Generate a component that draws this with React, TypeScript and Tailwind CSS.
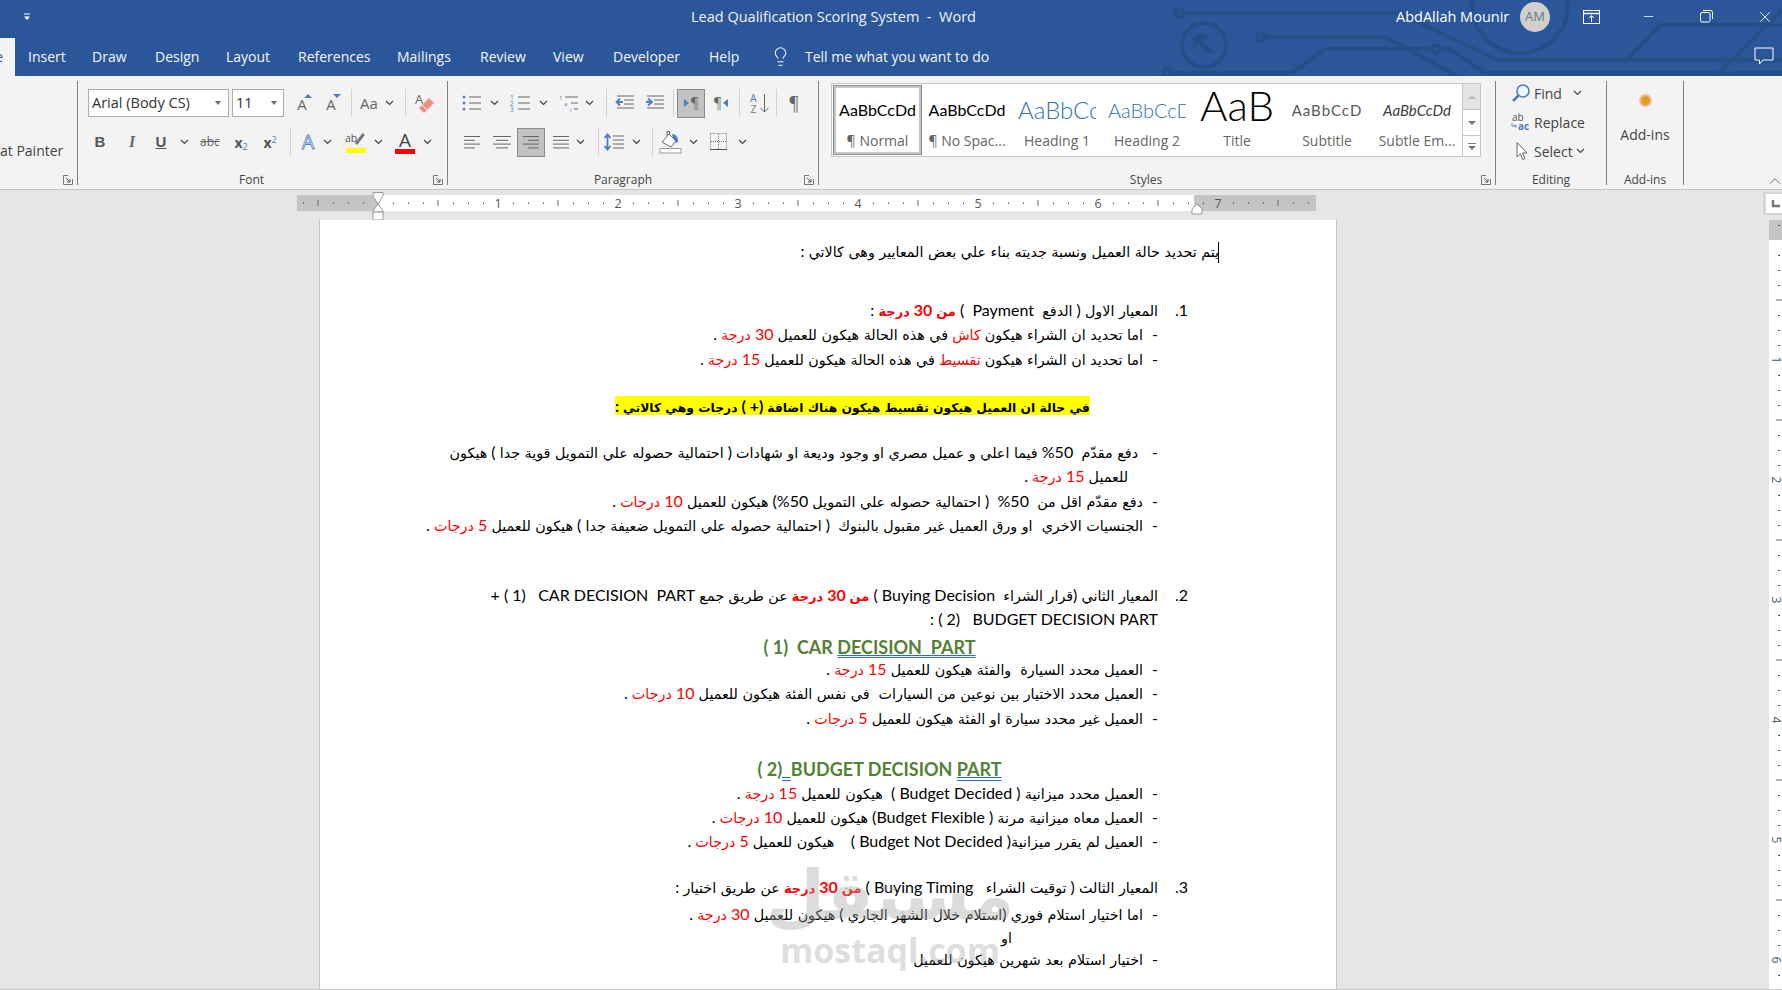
import React from 'react';
import { Lightbulb, Minus, X, ChevronUp } from 'lucide-react';

const tabs = [
  { label: 'Insert', w: 'w-[64px]' },
  { label: 'Draw', w: 'w-[63px]' },
  { label: 'Design', w: 'w-[71px]' },
  { label: 'Layout', w: 'w-[72px]' },
  { label: 'References', w: 'w-[99px]' },
  { label: 'Mailings', w: 'w-[83px]' },
  { label: 'Review', w: 'w-[73px]' },
  { label: 'View', w: 'w-[60px]' },
  { label: 'Developer', w: 'w-[96px]' },
  { label: 'Help', w: 'w-[72px]' },
];

function Chev({ className = '' }: { className?: string }) {
  return (
    <svg width="9" height="6" viewBox="0 0 9 6" className={`shrink-0 ${className}`}>
      <path d="M1 1l3.5 3.5L8 1" stroke="#444" fill="none" strokeWidth="1.2" />
    </svg>
  );
}

function Launcher() {
  return (
    <svg width="10" height="10" viewBox="0 0 10 10" className="absolute right-[4px] top-[3px]">
      <path d="M9.5 4V9.5H.5V.5H5" stroke="#777" fill="none" />
      <path d="M3 3l4 4M7 4v3H4" stroke="#555" fill="none" />
    </svg>
  );
}

function Sep({ className = '' }: { className?: string }) {
  return <div className={`w-px h-[28px] bg-[#d2d2d2] shrink-0 ${className}`} />;
}

function GroupLabel({ text, className = '', launcher = true }: { text: string; className?: string; launcher?: boolean }) {
  return (
    <div className="relative mt-auto -mb-[3px] h-[16px] text-center text-[12px] leading-[16px] text-[#444]">
      <div className={className}>{text}</div>
      {launcher && <Launcher />}
    </div>
  );
}

function Lines({ kind }: { kind: 'left' | 'center' | 'right' | 'justify' }) {
  const rows = {
    left: [[3, 19], [3, 14], [3, 19], [3, 14]],
    center: [[2, 20], [5, 17], [2, 20], [5, 17]],
    right: [[3, 19], [8, 19], [3, 19], [8, 19]],
    justify: [[3, 19], [3, 19], [3, 19], [3, 19]],
  }[kind];
  return (
    <svg width="22" height="16" viewBox="0 0 22 16">
      {rows.map(([a, b], i) => (
        <path key={i} d={`M${a} ${2.5 + i * 3.8}H${b}`} stroke="#666" strokeWidth="1" />
      ))}
    </svg>
  );
}

function Bullets() {
  return (
    <svg width="22" height="18" viewBox="0 0 22 18">
      {[3, 9, 15].map((y) => (
        <g key={y}>
          <circle cx="3" cy={y} r="1.5" fill="#5b86c1" />
          <path d={`M8 ${y}H20`} stroke="#666" />
        </g>
      ))}
    </svg>
  );
}

function Numbered() {
  return (
    <svg width="22" height="18" viewBox="0 0 22 18">
      {[3, 9, 15].map((y, i) => (
        <g key={y}>
          <text x="0" y={y + 2.5} fontSize="6.5" fill="#4c7ebb" fontFamily="Open Sans">{i + 1}</text>
          <path d={`M8 ${y}H20`} stroke="#666" />
        </g>
      ))}
    </svg>
  );
}

function Multi() {
  return (
    <svg width="22" height="18" viewBox="0 0 22 18">
      <text x="0" y="6" fontSize="6" fill="#4c7ebb" fontFamily="Open Sans">1</text>
      <path d="M6 3H19" stroke="#666" />
      <text x="5" y="12" fontSize="6" fill="#4c7ebb" fontFamily="Open Sans">a</text>
      <path d="M12 9H19" stroke="#666" />
      <text x="11" y="18" fontSize="6" fill="#4c7ebb" fontFamily="Open Sans">i</text>
      <path d="M15 15H19" stroke="#666" />
    </svg>
  );
}

function Indent({ inc }: { inc?: boolean }) {
  return (
    <svg width="22" height="18" viewBox="0 0 22 18">
      {[2, 6, 10, 14].map((y, i) => (
        <path key={y} d={`M${i === 1 || i === 2 ? 10 : 3} ${y}H20`} stroke="#666" />
      ))}
      {inc ? (
        <path d="M2 8H7M4 4.5L8 8l-4 3.5" stroke="#4c7ebb" strokeWidth="1.8" fill="none" />
      ) : (
        <path d="M9 8H3M6 4.5L2.5 8 6 11.5" stroke="#4c7ebb" strokeWidth="1.8" fill="none" />
      )}
    </svg>
  );
}

function Dir({ rtl }: { rtl?: boolean }) {
  return (
    <div className="flex items-center text-[16px] leading-none text-[#666] font-['Liberation_Serif',serif]">
      {!rtl && <span className="w-0 h-0 mr-[2px] border-y-[4px] border-y-transparent border-l-[5px] border-l-[#4c7ebb]" />}
      <span>¶</span>
      {rtl && <span className="w-0 h-0 ml-[2px] border-y-[4px] border-y-transparent border-r-[5px] border-r-[#4c7ebb]" />}
    </div>
  );
}

function Sort() {
  return (
    <svg width="22" height="22" viewBox="0 0 22 22">
      <text x="1" y="10" fontSize="10.5" fill="#4c7ebb" fontFamily="Open Sans">A</text>
      <text x="1.5" y="20.5" fontSize="10.5" fill="#777" fontFamily="Open Sans">Z</text>
      <path d="M15.5 2V20M11.5 16l4 4 4-4" stroke="#666" fill="none" />
    </svg>
  );
}

function Spacing() {
  return (
    <svg width="22" height="20" viewBox="0 0 22 20">
      <path d="M3.5 3V17M.5 6l3-3.5L6.5 6M.5 14l3 3.5 3-3.5" stroke="#4c7ebb" strokeWidth="1.8" fill="none" />
      {[4, 8, 12, 16].map((y) => (
        <path key={y} d={`M9 ${y}H20`} stroke="#666" />
      ))}
    </svg>
  );
}

function Shading() {
  return (
    <svg width="24" height="24" viewBox="0 0 24 24">
      <path d="M3 12L10 4l7 7-5 6z" fill="#fff" stroke="#666" />
      <path d="M8 6V1.5h2.5V5" fill="none" stroke="#666" />
      <path d="M13 4c4 0 6 3 6 8l-2 1-3-5z" fill="#4c7ebb" />
      <rect x="1" y="18.5" width="21" height="4.5" fill="#fff" stroke="#999" />
    </svg>
  );
}

function Borders() {
  return (
    <svg width="22" height="20" viewBox="0 0 22 20">
      <rect x="2.5" y="1.5" width="16" height="16" fill="none" stroke="#777" strokeDasharray="1 1" />
      <path d="M10.5 2V17M3 9.5H18" stroke="#777" strokeDasharray="1 1" />
      <path d="M2 17.5H19" stroke="#555" />
    </svg>
  );
}

function Grow({ up }: { up?: boolean }) {
  return (
    <div className="relative w-[20px] h-[20px] text-[15px] leading-[22px] text-[#666] text-center">
      A
      <span
        className={
          up
            ? 'absolute right-[0px] top-[1px] w-0 h-0 border-x-[4px] border-x-transparent border-b-[4px] border-b-[#4c7ebb]'
            : 'absolute right-[0px] top-[1px] w-0 h-0 border-x-[4px] border-x-transparent border-t-[4px] border-t-[#4c7ebb]'
        }
      />
    </div>
  );
}

function Eraser() {
  return (
    <svg width="22" height="24" viewBox="0 0 22 24">
      <text x="1" y="13" fontSize="13" fill="#666" fontFamily="Open Sans">A</text>
      <path d="M5 17L15 7l5 5-10 10z" fill="#f28b82" />
      <path d="M8 14l5 5" stroke="#fff" />
    </svg>
  );
}

function Highlight() {
  return (
    <div className="flex flex-col items-center w-[22px]">
      <svg width="22" height="17" viewBox="0 0 22 17">
        <text x="0" y="11" fontSize="10.5" fill="#555" fontFamily="Open Sans">ab</text>
        <path d="M12 14l8-10-2.5-2L10 12z" fill="#777" />
      </svg>
      <div className="w-[20px] h-[5px] bg-[#ffff00]" />
    </div>
  );
}

function ColorA() {
  return (
    <div className="flex flex-col items-center w-[22px]">
      <span className="text-[19px] leading-[18px] text-[#444]">A</span>
      <div className="w-[20px] h-[5px] bg-[#ff0000]" />
    </div>
  );
}

function Row({ children, className = '' }: { children: React.ReactNode; className?: string }) {
  return <div className={`flex items-center h-[28px] ${className}`}>{children}</div>;
}

function ActiveBox({ children, className = '' }: { children: React.ReactNode; className?: string }) {
  return (
    <div className={`w-[28px] h-[29px] flex items-center justify-center bg-[#c2c2c2] border border-[#8a8a8a] ${className}`}>
      {children}
    </div>
  );
}

function FontGroup() {
  return (
    <div className="flex flex-col w-[370px] h-[104px] border-r border-[#808080] shrink-0">
      <Row className="mt-[8px]">
        <div className="ml-[10px] w-[141px] h-[28px] border border-[#ababab] bg-white flex items-center justify-between pl-[3px] pr-[7px] text-[14.5px] text-[#333]">
          <span>Arial (Body CS)</span>
          <span className="w-0 h-0 border-x-[3.5px] border-x-transparent border-t-[4px] border-t-[#666]" />
        </div>
        <div className="ml-[3px] w-[52px] h-[28px] border border-[#ababab] bg-white flex items-center justify-between pl-[3px] pr-[6px] text-[14.5px] text-[#333]">
          <span>11</span>
          <span className="w-0 h-0 border-x-[3.5px] border-x-transparent border-t-[4px] border-t-[#666]" />
        </div>
        <div className="ml-[8px]"><Grow up /></div>
        <div className="ml-[9px]"><Grow /></div>
        <Sep className="ml-[10px]" />
        <span className="ml-[6px] w-[22px] text-center text-[15px] text-[#666]">Aa</span>
        <Chev className="ml-[5px]" />
        <Sep className="ml-[11px]" />
        <div className="ml-[8px]"><Eraser /></div>
      </Row>
      <Row className="mt-[11px]">
        <span className="ml-[14px] w-[16px] text-center text-[15px] font-bold text-[#555] font-['Liberation_Sans',sans-serif]">B</span>
        <span className="ml-[16px] w-[16px] text-center text-[16px] italic font-bold text-[#666] font-['Liberation_Serif',serif]">I</span>
        <span className="ml-[13px] w-[16px] text-center text-[15px] font-bold underline text-[#555] font-['Liberation_Sans',sans-serif]">U</span>
        <Chev className="ml-[11px]" />
        <span className="ml-[9px] w-[24px] text-center text-[12px] line-through text-[#666]">abc</span>
        <span className="ml-[9px] w-[20px] text-center text-[14px] font-bold text-[#555]">x<sub className="text-[9px] font-normal text-[#4c7ebb]">2</sub></span>
        <span className="ml-[9px] w-[20px] text-center text-[14px] font-bold text-[#555]">x<sup className="text-[9px] font-normal text-[#4c7ebb]">2</sup></span>
        <Sep className="ml-[10px]" />
        <span className="ml-[6px] w-[22px] text-center text-[20px] leading-[22px] text-[#f3f8ff] [-webkit-text-stroke:0.8px_#5b86c1]">A</span>
        <Chev className="ml-[4px]" />
        <div className="ml-[13px]"><Highlight /></div>
        <Chev className="ml-[7px]" />
        <div className="ml-[11px]"><ColorA /></div>
        <Chev className="ml-[7px]" />
      </Row>
      <GroupLabel text="Font" className="pr-[22px]" />
    </div>
  );
}

function ParagraphGroup() {
  return (
    <div className="flex flex-col w-[371px] h-[104px] border-r border-[#808080] shrink-0">
      <Row className="mt-[8px]">
        <div className="ml-[13px]"><Bullets /></div>
        <Chev className="ml-[7px]" />
        <div className="ml-[11px]"><Numbered /></div>
        <Chev className="ml-[7px]" />
        <div className="ml-[11px]"><Multi /></div>
        <Chev className="ml-[4px]" />
        <Sep className="ml-[12px]" />
        <div className="ml-[7px]"><Indent /></div>
        <div className="ml-[8px]"><Indent inc /></div>
        <Sep className="ml-[7px]" />
        <ActiveBox className="ml-[3px]"><Dir /></ActiveBox>
        <div className="ml-[5px] w-[22px] flex justify-center"><Dir rtl /></div>
        <Sep className="ml-[7px]" />
        <div className="ml-[9px]"><Sort /></div>
        <Sep className="ml-[5px]" />
        <span className="ml-[7px] w-[20px] text-center text-[20px] text-[#666] font-['Liberation_Serif',serif]">¶</span>
      </Row>
      <Row className="mt-[11px]">
        <div className="ml-[13px]"><Lines kind="left" /></div>
        <div className="ml-[8px]"><Lines kind="center" /></div>
        <ActiveBox className="ml-[4px]"><div className="-ml-[1px]"><Lines kind="right" /></div></ActiveBox>
        <div className="ml-[5px]"><Lines kind="justify" /></div>
        <Chev className="ml-[4px]" />
        <Sep className="ml-[13px]" />
        <div className="ml-[5px]"><Spacing /></div>
        <Chev className="ml-[6px]" />
        <Sep className="ml-[11px]" />
        <div className="ml-[6px]"><Shading /></div>
        <Chev className="ml-[6px]" />
        <div className="ml-[10px]"><Borders /></div>
        <Chev className="ml-[8px]" />
      </Row>
      <GroupLabel text="Paragraph" className="pr-[20px]" />
    </div>
  );
}

const styleItems = [
  { sample: 'AaBbCcDd', label: '¶ Normal', cls: "mt-[4px] font-['Lato'] text-[16px] text-black" },
  { sample: 'AaBbCcDd', label: '¶ No Spac...', cls: "mt-[4px] font-['Lato'] text-[16px] text-black" },
  { sample: 'AaBbCcDd', label: 'Heading 1', cls: "mt-[4px] font-['Lato'] font-light text-[24px] text-[#2e74b5]" },
  { sample: 'AaBbCcDd', label: 'Heading 2', cls: "mt-[4px] font-['Lato'] font-light text-[20px] text-[#2e74b5]" },
  { sample: 'AaB', label: 'Title', cls: "-mt-[1px] mb-[5px] font-['Lato'] font-light text-[42px] text-black" },
  { sample: 'AaBbCcD', label: 'Subtitle', cls: "mt-[4px] font-['Lato'] text-[15px] tracking-[1px] text-[#5a5a5a]" },
  { sample: 'AaBbCcDd', label: 'Subtle Em...', cls: "mt-[4px] font-['Lato'] italic text-[15px] text-[#404040]" },
];

function StylesGroup() {
  return (
    <div className="flex flex-col w-[677px] h-[104px] border-r border-[#808080] shrink-0">
      <div className="ml-[12px] mt-[2px] w-[650px] h-[74px] border border-[#c6c6c6] bg-white flex">
        <div className="flex-1 flex pl-[1px] pt-[1px]">
          {styleItems.map((s, i) => (
            <div
              key={s.label}
              className={
                i === 0
                  ? 'w-[89px] h-[70px] border-[3px] border-[#c6c6c6] outline outline-1 -outline-offset-1 outline-[#8a8a8a] flex flex-col items-center shrink-0'
                  : 'w-[90px] h-[70px] border-[3px] border-transparent flex flex-col items-center shrink-0'
              }
            >
              <div className={`w-[78px] h-[36px] overflow-hidden whitespace-nowrap flex items-center justify-center leading-[36px] ${s.cls}`}>
                <span className={i === 2 || i === 3 ? 'w-full' : ''}>{s.sample}</span>
              </div>
              <div className="mt-[2px] text-[14px] leading-[22px] text-[#666] whitespace-nowrap">{s.label}</div>
            </div>
          ))}
        </div>
        <div className="w-[18px] border-l border-[#c6c6c6] flex flex-col">
          <div className="h-[26px] bg-[#e3e3e3] border-b border-[#c6c6c6] flex items-center justify-center">
            <span className="w-0 h-0 border-x-[4px] border-x-transparent border-b-[4px] border-b-[#bbb]" />
          </div>
          <div className="h-[26px] border-b border-[#c6c6c6] flex items-center justify-center">
            <span className="w-0 h-0 border-x-[4px] border-x-transparent border-t-[4px] border-t-[#777]" />
          </div>
          <div className="flex-1 flex flex-col items-center justify-center gap-[2px]">
            <span className="w-[8px] h-px bg-[#777]" />
            <span className="w-0 h-0 border-x-[4px] border-x-transparent border-t-[4px] border-t-[#777]" />
          </div>
        </div>
      </div>
      <GroupLabel text="Styles" className="pr-[22px]" />
    </div>
  );
}

function EditingGroup() {
  return (
    <div className="flex flex-col w-[111px] h-[104px] border-r border-[#808080] shrink-0">
      <div className="pl-[15px] -mt-[1px] flex flex-col gap-[3px] text-[14px] text-[#444]">
        <div className="flex items-center h-[26px]">
          <svg width="20" height="20" viewBox="0 0 20 20">
            <circle cx="12" cy="8" r="6" fill="none" stroke="#4c7ebb" strokeWidth="1.6" />
            <path d="M7.5 12.5L2 18" stroke="#4c7ebb" strokeWidth="2.6" />
          </svg>
          <span className="ml-[3px]">Find</span>
          <Chev className="ml-[11px]" />
        </div>
        <div className="flex items-center h-[26px]">
          <svg width="20" height="20" viewBox="0 0 20 20">
            <text x="1" y="9" fontSize="10" fill="#555" fontFamily="Open Sans">ab</text>
            <path d="M1 11v3h4M4 12.5L5.5 14 4 15.5" stroke="#4c7ebb" fill="none" />
            <text x="7" y="18" fontSize="10" fontWeight="bold" fill="#4c7ebb" fontFamily="Open Sans">ac</text>
          </svg>
          <span className="ml-[3px]">Replace</span>
        </div>
        <div className="flex items-center h-[26px]">
          <svg width="20" height="20" viewBox="0 0 20 20">
            <path d="M6 1.5V16L9.3 12.8 11.8 18.5 14 17.5 11.5 12H16z" fill="#fff" stroke="#666" />
          </svg>
          <span className="ml-[3px]">Select</span>
          <Chev className="ml-[3px]" />
        </div>
      </div>
      <GroupLabel text="Editing" launcher={false} />
    </div>
  );
}

function AddinsGroup() {
  return (
    <div className="flex flex-col w-[77px] h-[104px] border-r border-[#808080] shrink-0">
      <div className="mt-[13px] flex flex-col items-center">
        <span className="w-[13px] h-[13px] rounded-full bg-[#e0a020] border-2 border-[#f6b9a6]" />
        <span className="mt-[18px] text-[14px] text-[#444] leading-[20px]">Add-ins</span>
      </div>
      <GroupLabel text="Add-ins" launcher={false} />
    </div>
  );
}

function Circuit() {
  return (
    <svg className="absolute left-0 top-0" width="1782" height="76" viewBox="0 0 1782 76" fill="none" stroke="#264e87" strokeWidth="4">
      <circle cx="1179" cy="13" r="4" />
      <path d="M1183 13H1400L1497 60H1782" />
      <circle cx="1204" cy="45" r="22" />
      <path d="M1195 37l16 16M1195 37h12M1195 37v12" strokeWidth="5" />
      <circle cx="1261" cy="37" r="4" />
      <path d="M1265 37H1386L1457 76" />
      <circle cx="1167" cy="73" r="4" />
      <path d="M1171 73H1292L1325 49H1432" />
      <circle cx="1436" cy="49" r="4" />
      <path d="M1440 49H1450L1485 73H1782" />
      <circle cx="1520" cy="5" r="48" />
      <path d="M1627 60L1660 25H1782M1716 76L1782 10" />
    </svg>
  );
}

function TitleBar() {
  return (
    <div className="relative h-[76px] bg-[#2b579a] text-white overflow-hidden shrink-0">
      <Circuit />
      <div className="relative h-[38px] flex items-center pb-[5px]">
        <svg width="8" height="8" viewBox="0 0 8 8" className="ml-[23px]">
          <path d="M1 1H7" stroke="#fff" />
          <path d="M1 3.5H7L4 7z" fill="#fff" />
        </svg>
        <div className="ml-[660px] w-[284px] text-center text-[14.5px] text-[#f1f1f1] whitespace-pre">Lead Qualification Scoring System  -  Word</div>
        <div className="ml-[421px] w-[113px] text-[14.5px] whitespace-nowrap">AbdAllah Mounir</div>
        <div className="ml-[11px] w-[30px] h-[30px] rounded-full bg-[#d2d0ce] text-[#69797e] text-[13px] flex items-center justify-center">AM</div>
        <svg width="18" height="16" viewBox="0 0 18 16" className="ml-[33px]" fill="none" stroke="#fff">
          <rect x=".5" y="1.5" width="16" height="13" />
          <path d="M1 4.5H16" strokeWidth="1.5" />
          <path d="M8.5 13V7M6 9l2.5-2.5L11 9" />
        </svg>
        <Minus size={15} strokeWidth={1.2} className="ml-[40px]" />
        <svg width="13" height="13" viewBox="0 0 13 13" className="ml-[44px]" fill="none" stroke="#fff">
          <rect x=".5" y="2.5" width="9.5" height="9.5" rx="1.5" />
          <path d="M3 .5H10.5a2 2 0 0 1 2 2V9" />
        </svg>
        <X size={18} strokeWidth={1.2} className="ml-[43px]" />
      </div>
      <div className="relative h-[38px] flex items-center text-[14px] text-[#f4f4f4]">
        <div className="w-[15px] h-[38px] pb-[2px] bg-[#f3f3f3] overflow-hidden flex justify-end items-center text-[#2b579a] pr-[12px]">e</div>
        <div className="w-[13px]" />
        {tabs.map((t) => (
          <div key={t.label} className={`${t.w} shrink-0 pb-[2px]`}>{t.label}</div>
        ))}
        <Lightbulb size={21} strokeWidth={1.2} className="-ml-[11px] mb-[2px]" />
        <div className="ml-[14px] pb-[2px] whitespace-nowrap">Tell me what you want to do</div>
        <svg width="20" height="19" viewBox="0 0 20 19" className="ml-[765px] mb-[2px]" fill="none" stroke="#fff">
          <path d="M1 1H19V13H9L5.5 17V13H1z" />
        </svg>
      </div>
    </div>
  );
}

function Ribbon() {
  return (
    <div className="relative h-[114px] pt-[5px] bg-[#f3f3f3] border-b border-[#c6c6c6] flex shrink-0">
      {/* Clipboard, only the tail of it is on screen */}
      <div className="relative flex flex-col w-[78px] h-[104px] border-r border-[#808080] shrink-0 overflow-hidden">
        <div className="mt-[60px] text-[14px] text-[#444] leading-[20px] whitespace-nowrap">at Painter</div>
        <div className="relative mt-auto -mb-[3px] h-[16px]"><Launcher /></div>
      </div>
      <FontGroup />
      <ParagraphGroup />
      <StylesGroup />
      <EditingGroup />
      <AddinsGroup />
      <ChevronUp size={18} strokeWidth={1} color="#444" className="absolute right-[-2px] bottom-[-1px]" />
    </div>
  );
}

function HRuler() {
  const ticks: React.ReactNode[] = [];
  for (let i = -5; i <= 62; i++) {
    const x = 81 + i * 15;
    if (i % 8 === 0) {
      if (i === 0) continue;
      ticks.push(
        <text key={i} x={x} y="17.5" textAnchor="middle" fontSize="12.5" fill="#555" fontFamily="Open Sans">{i / 8}</text>,
      );
    } else if (i % 4 === 0) {
      ticks.push(<path key={i} d={`M${x} 10V16`} stroke="#666" />);
    } else {
      ticks.push(<rect key={i} x={x} y="12.5" width="1" height="1.5" fill="#555" />);
    }
  }
  return (
    <svg width="1019" height="30" viewBox="0 0 1019 30" className="ml-[297px] block">
      <rect x="0" y="5" width="1019" height="16" fill="#c4c4c4" />
      <rect x="81" y="5" width="816" height="16" fill="#fff" />
      {ticks}
      <path d="M76 2.5H86V6L81 14 76 6z" fill="#fff" stroke="#999" />
      <path d="M81 14L86 21V22H76V21z" fill="#fff" stroke="#999" />
      <rect x="76" y="22" width="10" height="8" fill="#fff" stroke="#999" />
      <path d="M900 14L905 19V24H895V19z" fill="#fff" stroke="#999" />
    </svg>
  );
}

function VRuler() {
  const ticks: React.ReactNode[] = [];
  ticks.push(<rect key="top" x="15" y="35" width="2" height="1" fill="#555" />);
  for (let i = 1; i <= 50; i++) {
    const y = 50 + i * 15;
    if (i % 8 === 0) {
      ticks.push(
        <text key={i} x="9" y={y} transform={`rotate(90 9 ${y})`} textAnchor="middle" fontSize="12" fill="#555" fontFamily="Open Sans">{i / 8}</text>,
      );
    } else if (i % 4 === 0) {
      ticks.push(<path key={i} d={`M13 ${y}H19`} stroke="#666" />);
    } else {
      ticks.push(<rect key={i} x="15" y={y} width="2" height="1" fill="#555" />);
    }
  }
  return (
    <svg width="19" height="799" viewBox="0 0 19 799" className="block shrink-0">
      <rect x="0" y="2" width="19" height="23" fill="#d4d4d4" />
      <rect x="3" y="4" width="16" height="19" fill="#fff" />
      <path d="M10 10V16H17" stroke="#777" strokeWidth="2.5" fill="none" />
      <rect x="6" y="30" width="13" height="769" fill="#fff" />
      <rect x="6" y="30" width="13" height="20" fill="#c4c4c4" />
      {ticks}
    </svg>
  );
}

// Arabic runs get their own font and size, Latin stays in Lato
function T({ children, className = '', ar = 'text-[14.3px]' }: { children: string; className?: string; ar?: string }) {
  const parts = children.split(/([\u0600-\u06FF]+(?:\s+[\u0600-\u06FF]+)*)/);
  return (
    <>
      {parts.map((p, i) =>
        i % 2 === 1 ? (
          <span key={i} className={`font-['DejaVu_Sans',sans-serif] ${ar} ${className}`}>{p}</span>
        ) : (
          <span key={i} className={`text-[16px] ${className}`}>{p}</span>
        ),
      )}
    </>
  );
}

const Red = ({ children }: { children: string }) => <T className="text-[#ff0000]">{children}</T>;
const RedB = ({ children }: { children: string }) => <T ar="text-[13px]" className="text-[#ff0000] font-bold">{children}</T>;

function Ltr({ children }: { children: string }) {
  return <span dir="ltr" className="text-[16px]">{children}</span>;
}

function Num({ n, children, className = '' }: { n: number; children: React.ReactNode; className?: string }) {
  return (
    <div className={`flex h-[24.5px] leading-[24.5px] pr-[31px] ${className}`}>
      <span className="w-[30px] shrink-0 text-[16px]">{n}.</span>
      <div className="whitespace-pre">{children}</div>
    </div>
  );
}

function Li({ children, className = '', wide = false }: { children: React.ReactNode; className?: string; wide?: boolean }) {
  return (
    <div className={`flex h-[24.5px] leading-[24.5px] pr-[61px] ${className}`}>
      <span className={wide ? 'w-[20px] shrink-0 text-[16px]' : 'w-[15px] shrink-0 text-[16px]'}>-</span>
      <div className="whitespace-pre">{children}</div>
    </div>
  );
}

function Page() {
  return (
    <div className="relative w-[1018px] ml-[319px] h-[769px] bg-white border-x border-[#c6c6c6] pl-[58px] pr-[117px] pt-[19px] text-black font-['Lato',sans-serif] overflow-hidden" dir="rtl">
      <div className="h-[24.5px] leading-[24.5px] whitespace-pre">
        <span className="inline-block w-px h-[21px] -ml-px bg-black align-middle" />
        <T>يتم تحديد حالة العميل ونسبة جديته بناء علي بعض المعايير وهى كالاتي :</T>
      </div>

      <Num n={1} className="mt-[34px]">
        <T>المعيار الاول ( الدفع  </T><Ltr>Payment</Ltr><T>  ) </T><RedB>من 30 درجة</RedB><T> :</T>
      </Num>
      <Li><T>اما تحديد ان الشراء هيكون </T><Red>كاش</Red><T> في هذه الحالة هيكون للعميل </T><Red>30 درجة</Red><T> .</T></Li>
      <Li><T>اما تحديد ان الشراء هيكون </T><Red>تقسيط</Red><T> في هذه الحالة هيكون للعميل </T><Red>15 درجة</Red><T> .</T></Li>

      <div className="mt-[23px] h-[24.5px] leading-[24.5px] pl-[108px] text-center whitespace-pre">
        <span className="bg-[#ffff00]"><T ar="text-[12.3px]" className="font-bold">في حالة ان العميل هيكون تقسيط هيكون هناك اضافة (+ ) درجات وهي كالاتي :</T></span>
      </div>

      <Li wide className="mt-[21px]">
        <T>دفع مقدّم  </T><Ltr>%50</Ltr><T> فيما اعلي و عميل مصري او وجود وديعة او شهادات ( احتمالية حصوله علي التمويل قوية جدا ) هيكون</T>
      </Li>
      <div className="h-[24.5px] leading-[24.5px] pr-[91px] whitespace-pre">
        <T>للعميل </T><Red>15 درجة</Red><T> .</T>
      </div>
      <Li><T>دفع مقدّم اقل من  </T><Ltr>%50</Ltr><T>  ( احتمالية حصوله علي التمويل </T><Ltr>%50</Ltr><T>) هيكون للعميل </T><Red>10 درجات</Red><T> .</T></Li>
      <Li><T>الجنسيات الاخري  او ورق العميل غير مقبول بالبنوك  ( احتمالية حصوله علي التمويل ضعيفة جدا ) هيكون للعميل </T><Red>5 درجات</Red><T> .</T></Li>

      <Num n={2} className="mt-[45px]">
        <T>المعيار الثاني (قرار الشراء  </T><Ltr>Buying Decision</Ltr><T> ) </T><RedB>من 30 درجة</RedB><T> عن طريق جمع </T><Ltr>+ ( 1)   CAR DECISION  PART</Ltr>
      </Num>
      <div className="h-[24.5px] leading-[24.5px] pr-[61px] whitespace-pre">
        <Ltr>: ( 2)   BUDGET DECISION PART</Ltr>
      </div>

      <div dir="ltr" className="mt-[3px] h-[24.5px] leading-[24.5px] pl-[142px] text-center whitespace-pre text-[18px] font-bold text-[#538135]">
        ( 1)  CAR <span className="underline decoration-double decoration-[#2b6cd4]">DECISION  PART</span>
      </div>
      <Li className="-mt-[2px]"><T>العميل محدد السيارة  والفئة هيكون للعميل </T><Red>15 درجة</Red><T> .</T></Li>
      <Li className="-mt-[0.5px]"><T>العميل محدد الاختيار بين نوعين من السيارات  في نفس الفئة هيكون للعميل </T><Red>10 درجات</Red><T> .</T></Li>
      <Li><T>العميل غير محدد سيارة او الفئة هيكون للعميل </T><Red>5 درجات</Red><T> .</T></Li>

      <div dir="ltr" className="mt-[27px] h-[24.5px] leading-[24.5px] pl-[162px] text-center whitespace-pre text-[18px] font-bold text-[#538135]">
        ( 2<span className="underline decoration-double decoration-[#2b6cd4]">)  </span>BUDGET DECISION <span className="underline decoration-double decoration-[#2b6cd4]">PART</span>
      </div>
      <Li className="-mt-[1px]"><T>العميل محدد ميزانية ( </T><Ltr>Budget Decided</Ltr><T> )  هيكون للعميل </T><Red>15 درجة</Red><T> .</T></Li>
      <Li className="-mt-[0.5px]"><T>العميل معاه ميزانية مرنة ( </T><Ltr>Budget Flexible</Ltr><T>) هيكون للعميل </T><Red>10 درجات</Red><T> .</T></Li>
      <Li className="-mt-[0.5px]"><T>العميل لم يقرر ميزانية( </T><Ltr>Budget Not Decided</Ltr><T> )    هيكون للعميل </T><Red>5 درجات</Red><T> .</T></Li>

      <Num n={3} className="mt-[22px]">
        <T>المعيار الثالث ( توقيت الشراء   </T><Ltr>Buying Timing</Ltr><T> ) </T><RedB>من 30 درجة</RedB><T> عن طريق اختيار :</T>
      </Num>
      <Li className="mt-[2px]"><T>اما اختيار استلام فوري (استلام خلال الشهر الجاري ) هيكون للعميل </T><Red>30 درجة</Red><T> .</T></Li>
      <div className="-mt-[1px] h-[24.5px] leading-[24.5px] pr-[207px]"><T>او</T></div>
      <Li className="-mt-[3px]"><T>اختيار استلام بعد شهرين هيكون للعميل</T></Li>

      {/* mostaql watermark sits on top of the page */}
      <div className="absolute left-[455px] top-[640px] w-[230px] flex flex-col items-center text-[#a8a8a8]/40 pointer-events-none" dir="ltr">
        <span className="font-['DejaVu_Sans',sans-serif] font-bold text-[68px] leading-[72px]">مستقل</span>
        <span className="font-['Open_Sans',sans-serif] font-bold text-[34px] leading-[36px]">mostaql.com</span>
      </div>
    </div>
  );
}

export default function App() {
  return (
    <div className="w-[1782px] h-[990px] overflow-hidden flex flex-col bg-[#e6e6e6] font-['Open_Sans',sans-serif]">
      <TitleBar />
      <Ribbon />
      <div className="flex-1 flex min-h-0 border-b border-[#c6c6c6]">
        <div className="flex-1 min-w-0 overflow-hidden">
          <HRuler />
          <Page />
        </div>
        <VRuler />
      </div>
    </div>
  );
}
